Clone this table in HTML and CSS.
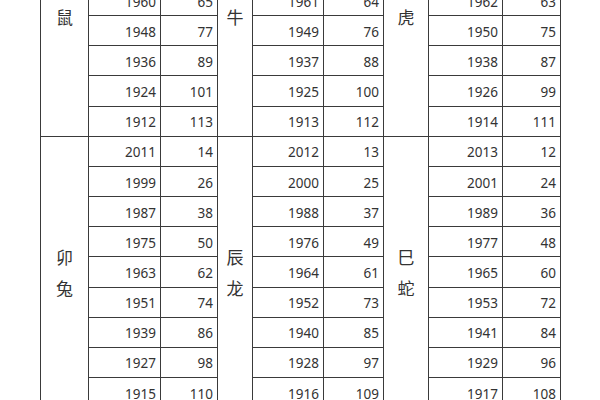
FILE: index.html
```html
<!DOCTYPE html>
<html lang="zh">
<head>
<meta charset="utf-8">
<title>生肖年份对照表</title>
<link rel="stylesheet" href="styles.css">
</head>
<body>
<div class="crop">
<table class="zodiac">
<colgroup>
<col class="c-lab1"><col class="c-y1"><col class="c-a1">
<col class="c-lab2"><col class="c-y2"><col class="c-a2">
<col class="c-lab3"><col class="c-y3"><col class="c-a3">
</colgroup>
<tbody>
<tr>
<td class="label top" rowspan="5">鼠</td><td class="num">1960</td><td class="num">65</td>
<td class="label top" rowspan="5">牛</td><td class="num">1961</td><td class="num">64</td>
<td class="label top" rowspan="5">虎</td><td class="num">1962</td><td class="num">63</td>
</tr>
<tr><td class="num">1948</td><td class="num">77</td><td class="num">1949</td><td class="num">76</td><td class="num">1950</td><td class="num">75</td></tr>
<tr><td class="num">1936</td><td class="num">89</td><td class="num">1937</td><td class="num">88</td><td class="num">1938</td><td class="num">87</td></tr>
<tr><td class="num">1924</td><td class="num">101</td><td class="num">1925</td><td class="num">100</td><td class="num">1926</td><td class="num">99</td></tr>
<tr><td class="num">1912</td><td class="num">113</td><td class="num">1913</td><td class="num">112</td><td class="num">1914</td><td class="num">111</td></tr>
<tr>
<td class="label" rowspan="9">卯<br>兔</td><td class="num">2011</td><td class="num">14</td>
<td class="label" rowspan="9">辰<br>龙</td><td class="num">2012</td><td class="num">13</td>
<td class="label" rowspan="9">巳<br>蛇</td><td class="num">2013</td><td class="num">12</td>
</tr>
<tr><td class="num">1999</td><td class="num">26</td><td class="num">2000</td><td class="num">25</td><td class="num">2001</td><td class="num">24</td></tr>
<tr><td class="num">1987</td><td class="num">38</td><td class="num">1988</td><td class="num">37</td><td class="num">1989</td><td class="num">36</td></tr>
<tr><td class="num">1975</td><td class="num">50</td><td class="num">1976</td><td class="num">49</td><td class="num">1977</td><td class="num">48</td></tr>
<tr><td class="num">1963</td><td class="num">62</td><td class="num">1964</td><td class="num">61</td><td class="num">1965</td><td class="num">60</td></tr>
<tr><td class="num">1951</td><td class="num">74</td><td class="num">1952</td><td class="num">73</td><td class="num">1953</td><td class="num">72</td></tr>
<tr><td class="num">1939</td><td class="num">86</td><td class="num">1940</td><td class="num">85</td><td class="num">1941</td><td class="num">84</td></tr>
<tr><td class="num">1927</td><td class="num">98</td><td class="num">1928</td><td class="num">97</td><td class="num">1929</td><td class="num">96</td></tr>
<tr><td class="num">1915</td><td class="num">110</td><td class="num">1916</td><td class="num">109</td><td class="num">1917</td><td class="num">108</td></tr>
</tbody>
</table>
</div>
</body>
</html>
```
FILE: styles.css
```css
html, body {
  margin: 0;
  padding: 0;
  background: #ffffff;
  overflow: hidden;
  width: 600px;
  height: 400px;
}

.crop {
  margin-top: -15px;
  padding-left: 40px;
}

.zodiac {
  border-collapse: collapse;
  table-layout: fixed;
  width: 520px;
  color: #333333;
  font-family: "Noto Sans", "Noto Sans CJK SC", sans-serif;
}

.c-lab1 { width: 48px; }
.c-y1 { width: 72px; }
.c-a1 { width: 57px; }
.c-lab2 { width: 35px; }
.c-y2 { width: 71px; }
.c-a2 { width: 60px; }
.c-lab3 { width: 45px; }
.c-y3 { width: 74px; }
.c-a3 { width: 58px; }

.zodiac td {
  border: 1px solid #3a3a3a;
  height: 30.17px;
  padding: 0;
  box-sizing: border-box;
}

.num {
  text-align: right;
  padding-right: 4px !important;
  font-size: 13.5px;
  line-height: 16px;
  padding-top: 2px !important;
}

.label {
  text-align: center;
  vertical-align: middle;
  font-family: "Noto Sans CJK SC", sans-serif;
  font-size: 17px;
  line-height: 31px;
  color: #333333;
}

.label.top {
  vertical-align: top;
  padding-top: 15px !important;
}
```
